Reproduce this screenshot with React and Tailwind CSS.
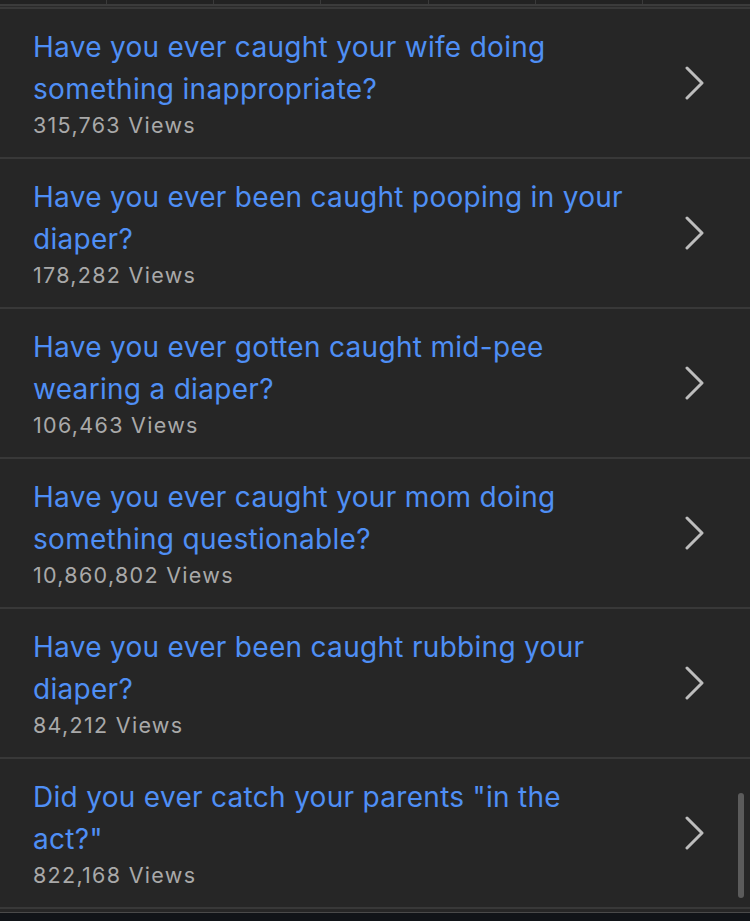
import React from 'react';

const questions = [
  { title: 'Have you ever caught your wife doing something inappropriate?', views: '315,763' },
  { title: 'Have you ever been caught pooping in your diaper?', views: '178,282' },
  { title: 'Have you ever gotten caught mid-pee wearing a diaper?', views: '106,463' },
  { title: 'Have you ever caught your mom doing something questionable?', views: '10,860,802' },
  { title: 'Have you ever been caught rubbing your diaper?', views: '84,212' },
  { title: 'Did you ever catch your parents "in the act?"', views: '822,168' },
];

function Chevron() {
  return (
    <svg width="22" height="34" viewBox="0 0 22 34" fill="none" className="shrink-0">
      <path d="M3 2 L18 17 L3 32" stroke="#bdbdbd" strokeWidth="3" strokeLinecap="round" strokeLinejoin="round" />
    </svg>
  );
}

export default function App() {
  return (
    <div className="relative w-[750px] h-[921px] overflow-hidden bg-[#262626] font-['Inter','Liberation_Sans',sans-serif]">
      {/* cut-off table row above */}
      <div className="grid grid-cols-7 h-[4px] bg-[#222222]">
        {Array.from({ length: 7 }).map((_, i) => (
          <div key={i} className="border-r border-[#3a3a3a] last:border-r-0" />
        ))}
      </div>
      <div className="h-[2px] bg-[#3b3b3b]" />
      <div className="h-[1px] bg-[#2a2a2a]" />
      <div className="h-[2px] bg-[#393939]" />

      {/* list */}
      <div className="flex flex-col">
        {questions.map((q, i) => (
          <div key={i} className="flex items-center h-[150px] pl-[33px] pr-[44px] border-b-2 border-[#383838]">
            <div className="flex-1">
              <div className="w-[598px] text-[28px] leading-[42px] text-[#4f8ff5] tracking-[0.3px]">{q.title}</div>
              <div className="text-[21.5px] leading-[30px] text-[#a9a9a9] tracking-[1.3px]">{q.views} Views</div>
            </div>
            <Chevron />
          </div>
        ))}
      </div>

      <div className="h-[3px] bg-[#262626]" />
      <div className="h-[1px] bg-[#4a4a4a]" />
      <div className="h-[20px] bg-[#111418]" />

      {/* overlay scrollbar */}
      <div className="absolute left-[738px] top-[793px] w-[6px] h-[105px] rounded-full bg-[#5b5b5b]" />
    </div>
  );
}
